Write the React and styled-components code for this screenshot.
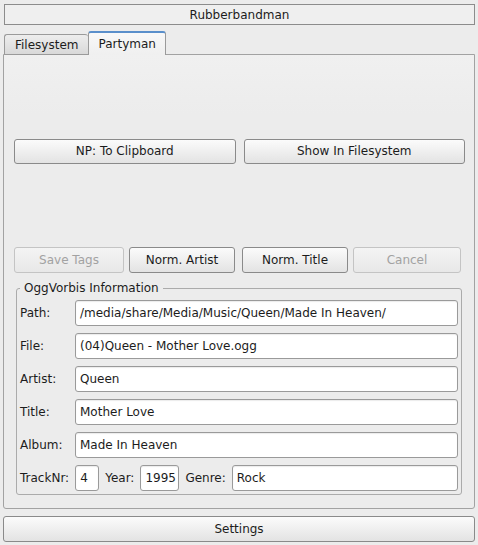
import React from "react";
import styled, { createGlobalStyle } from "styled-components";

const Global = createGlobalStyle`
  html, body { margin: 0; padding: 0; }
  body {
    background: #ececec;
    font-family: "DejaVu Sans", "Liberation Sans", sans-serif;
    font-size: 12px;
    color: #1c1c1c;
  }
  * { box-sizing: border-box; }
`;

const Window = styled.div`
  width: 478px;
  height: 545px;
  display: flex;
  flex-direction: column;
  padding: 4px 3px 3px 3px;
`;

const TitleBar = styled.div`
  height: 21px;
  margin-left: 1px;
  border: 1px solid #8c8c8c;
  background: #efefef;
  display: flex;
  align-items: center;
  justify-content: center;
  line-height: 14px;
`;

const TabBar = styled.div`
  margin-top: 6px;
  margin-left: 1px;
  height: 24px;
  margin-bottom: -1px;
  display: flex;
  align-items: flex-end;
  position: relative;
  z-index: 1;
`;

const Tab = styled.div`
  height: ${(p) => (p.$active ? 24 : 21)}px;
  padding: 0 ${(p) => (p.$active ? 9 : 10)}px;
  display: flex;
  align-items: center;
  border: 1px solid #9a9a9a;
  border-right: ${(p) => (p.$active ? "1px solid #9a9a9a" : "none")};
  border-bottom: ${(p) => (p.$active ? "none" : "1px solid #9a9a9a")};
  border-top: ${(p) => (p.$active ? "2px solid #5a8fcb" : "1px solid #9a9a9a")};
  border-radius: 3px 3px 0 0;
  background: ${(p) =>
    p.$active
      ? "linear-gradient(#f8f8f8, #efefef)"
      : "linear-gradient(#ededed, #d9d9d9)"};
  padding-top: ${(p) => (p.$active ? 0 : 1)}px;
  line-height: 14px;
`;

const Pane = styled.div`
  flex: 1;
  border: 1px solid #a2a2a2;
  border-radius: 0 0 3px 3px;
  background: linear-gradient(#f0f0f0, #ececec 60px);
  display: flex;
  flex-direction: column;
  padding: 0 9px 13px 10px;
`;

const TopArea = styled.div`
  flex: 1;
  display: flex;
  align-items: center;
  gap: 8px;
`;

const Button = styled.button`
  font: inherit;
  height: ${(p) => p.$h || 26}px;
  flex: ${(p) => (p.$grow ? 1 : "none")};
  border: 1px solid ${(p) => (p.disabled ? "#c4c4c4" : "#8a8a8a")};
  border-radius: 3px;
  background: ${(p) =>
    p.disabled
      ? "linear-gradient(#f4f4f4, #e8e8e8)"
      : "linear-gradient(#fbfbfb, #e3e3e3)"};
  color: ${(p) => (p.disabled ? "#a2a2a2" : "#1c1c1c")};
  padding: 0;
  line-height: 14px;
`;

const ActionRow = styled.div`
  display: grid;
  grid-template-columns: 110px 106px 108px 108px;
  column-gap: 5px;
  & > :nth-child(3) { margin-left: 2px; }
`;

const Group = styled.fieldset`
  margin: 8px 3px 0 2px;
  border: 1px solid #ababab;
  border-radius: 3px;
  padding: 5px 3px 3px 3px;
  display: flex;
  flex-direction: column;
  gap: 7px;
  min-width: 0;
`;

const Legend = styled.legend`
  padding: 0 4px;
  line-height: 14px;
`;

const Field = styled.div`
  display: grid;
  grid-template-columns: 55px 1fr;
  align-items: center;
`;

const Label = styled.span`
  line-height: 14px;
  white-space: nowrap;
`;

const Input = styled.div`
  height: 26px;
  width: ${(p) => (p.$w ? `${p.$w}px` : "auto")};
  flex: ${(p) => (p.$w ? "none" : 1)};
  background: #fff;
  border: 1px solid #9a9a9a;
  border-radius: 3px;
  box-shadow: inset 0 1px 1px rgba(0, 0, 0, 0.08);
  display: flex;
  align-items: center;
  padding: 0 4px;
  line-height: 14px;
  white-space: nowrap;
  overflow: hidden;
`;

const TrackRow = styled.div`
  display: flex;
  align-items: center;
  gap: 6px;
`;

const SettingsButton = styled(Button)`
  margin-top: 7px;
  width: 472px;
`;

const fields = [
  ["Path:", "/media/share/Media/Music/Queen/Made In Heaven/"],
  ["File:", "(04)Queen - Mother Love.ogg"],
  ["Artist:", "Queen"],
  ["Title:", "Mother Love"],
  ["Album:", "Made In Heaven"],
];

export default function App() {
  return (
    <>
      <Global />
      <Window>
        <TitleBar>Rubberbandman</TitleBar>
        <TabBar>
          <Tab>Filesystem</Tab>
          <Tab $active>Partyman</Tab>
        </TabBar>
        <Pane>
          <TopArea>
            <Button $grow $h={25}>NP: To Clipboard</Button>
            <Button $grow $h={25}>Show In Filesystem</Button>
          </TopArea>
          <ActionRow>
            <Button disabled>Save Tags</Button>
            <Button>Norm. Artist</Button>
            <Button>Norm. Title</Button>
            <Button disabled>Cancel</Button>
          </ActionRow>
          <Group>
            <Legend>OggVorbis Information</Legend>
            {fields.map(([l, v]) => (
              <Field key={l}>
                <Label>{l}</Label>
                <Input>{v}</Input>
              </Field>
            ))}
            <TrackRow>
              <Label>TrackNr:</Label>
              <Input $w={24}>4</Input>
              <Label>Year:</Label>
              <Input $w={39}>1995</Input>
              <Label>Genre:</Label>
              <Input>Rock</Input>
            </TrackRow>
          </Group>
        </Pane>
        <SettingsButton>Settings</SettingsButton>
      </Window>
    </>
  );
}
